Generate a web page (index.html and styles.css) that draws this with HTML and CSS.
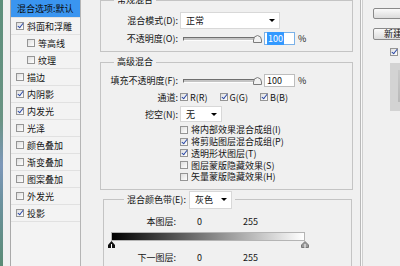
FILE: index.html
```html
<!DOCTYPE html>
<html lang="zh-CN">
<head>
    <meta charset="UTF-8">
    <meta name="viewport" content="width=device-width, initial-scale=1.0">
    <title>图层样式</title>
    <link rel="stylesheet" href="styles.css">
</head>
<body>
<div class="dialog">
    <div class="edge"></div>

    <!-- Style list -->
    <ul class="style-list">
        <li class="selected">混合选项:默认</li>
        <li><span class="cb on"></span>斜面和浮雕</li>
        <li class="sub"><span class="cb"></span>等高线</li>
        <li class="sub"><span class="cb"></span>纹理</li>
        <li><span class="cb"></span>描边</li>
        <li><span class="cb on"></span>内阴影</li>
        <li><span class="cb on"></span>内发光</li>
        <li><span class="cb"></span>光泽</li>
        <li><span class="cb"></span>颜色叠加</li>
        <li><span class="cb"></span>渐变叠加</li>
        <li><span class="cb"></span>图案叠加</li>
        <li><span class="cb"></span>外发光</li>
        <li><span class="cb on"></span>投影</li>
    </ul>

    <div class="main">
        <!-- General blending -->
        <fieldset class="group general">
            <legend>常规混合</legend>
            <div class="row mode-row">
                <label>混合模式(D):</label>
                <div class="select mode">正常<i class="arrow"></i></div>
            </div>
            <div class="row num-row">
                <label>不透明度(O):</label>
                <div class="slider">
                    <span class="track"></span>
                    <svg class="thumb" width="9" height="8" viewBox="0 0 9 8"><path d="M0.5 7.5 V5 Q0.5 1 4.5 0.5 Q8.5 1 8.5 5 V7.5 Z" fill="#f2f2f2" stroke="#7c7c7c"/></svg>
                </div>
                <span class="num focus"><span class="hl">100</span></span>
                <span class="pct">%</span>
            </div>
        </fieldset>

        <!-- Advanced blending -->
        <fieldset class="group advanced">
            <legend>高级混合</legend>
            <div class="row num-row">
                <label>填充不透明度(F):</label>
                <div class="slider">
                    <span class="track"></span>
                    <svg class="thumb" width="9" height="8" viewBox="0 0 9 8"><path d="M0.5 7.5 V5 Q0.5 1 4.5 0.5 Q8.5 1 8.5 5 V7.5 Z" fill="#f2f2f2" stroke="#7c7c7c"/></svg>
                </div>
                <span class="num">100</span>
                <span class="pct">%</span>
            </div>
            <div class="row channel-row">
                <label>通道:</label>
                <span class="channel"><span class="cb on"></span>R(R)</span>
                <span class="channel"><span class="cb on"></span>G(G)</span>
                <span class="channel"><span class="cb on"></span>B(B)</span>
            </div>
            <div class="row knock-row">
                <label>挖空(N):</label>
                <div class="select knock">无<i class="arrow"></i></div>
            </div>
            <ul class="options">
                <li><span class="cb"></span>将内部效果混合成组(I)</li>
                <li><span class="cb on"></span>将剪贴图层混合成组(P)</li>
                <li><span class="cb on"></span>透明形状图层(T)</li>
                <li><span class="cb"></span>图层蒙版隐藏效果(S)</li>
                <li><span class="cb"></span>矢量蒙版隐藏效果(H)</li>
            </ul>
        </fieldset>

        <!-- Blend if -->
        <fieldset class="group blend-if">
            <legend>
                <div class="legend-row">
                    <span>混合颜色带(E):</span>
                    <div class="select band">灰色<i class="arrow"></i></div>
                </div>
            </legend>
            <div class="layer-row">
                <label>本图层:</label>
                <span class="v0">0</span>
                <span>255</span>
            </div>
            <div class="ramp"></div>
            <div class="stops">
                <svg width="7" height="7" viewBox="0 0 7 7"><path d="M0 7 V4 L3.5 0 L7 4 V7 Z" fill="#111"/><path d="M3.5 3 V7" stroke="#fff"/></svg>
                <svg width="8" height="7" viewBox="0 0 8 7"><path d="M0.5 6.5 V4 L4 0.5 L7.5 4 V6.5 Z" fill="#9a9a9a" stroke="#777"/><path d="M4 3 V7" stroke="#fff"/></svg>
            </div>
            <div class="layer-row">
                <label>下一图层:</label>
                <span class="v0">0</span>
                <span>255</span>
            </div>
        </fieldset>
    </div>

    <div class="divider"></div>

    <div class="side">
        <button class="btn top-btn"></button>
        <button class="btn new-btn">新建样式(W)...</button>
        <span class="cb on preview-cb"></span>
        <div class="preview"><div class="preview-inner"></div></div>
    </div>
</div>
</body>
</html>
```

FILE: styles.css
```css
* {
    box-sizing: border-box;
}

body {
    margin: 0;
    width: 400px;
    height: 266px;
    overflow: hidden;
    background-color: #f0f0f0;
    font-family: "Noto Sans CJK SC", "Microsoft YaHei", sans-serif;
    font-size: 9px;
    color: #141414;
}

.dialog {
    display: flex;
    height: 266px;
}

.edge {
    width: 3px;
    flex: none;
    background: linear-gradient(to bottom, #5d8f7b 0%, #6a9484 45%, #7d97b9 62%, #6c92a0 75%, #5a8b74 100%);
}

/* style list */

.style-list {
    list-style: none;
    margin: 0 0 0 7px;
    padding: 0;
    width: 71px;
    flex: none;
    border-left: 1px solid #a9a9a9;
    border-right: 1px solid #b5b5b5;
    background-color: #f3f3f3;
}

.style-list li {
    height: 17px;
    display: flex;
    align-items: center;
    padding-left: 5px;
    border-bottom: 1px solid #e1e1e1;
    white-space: nowrap;
    overflow: hidden;
}

.style-list li.selected {
    height: 18px;
    padding-left: 6px;
    background-color: #3a95f0;
    color: #0a0a0a;
}

.style-list li.sub {
    padding-left: 16px;
}

.cb {
    position: relative;
    flex: none;
    width: 8px;
    height: 8px;
    margin-right: 3px;
    border: 1px solid #959595;
    background: linear-gradient(135deg, #dedede, #ffffff);
}

.cb.on::after {
    content: "";
    position: absolute;
    left: 2px;
    top: -1px;
    width: 2px;
    height: 5px;
    border: solid #2846a6;
    border-width: 0 1.5px 1.5px 0;
    transform: rotate(38deg);
}

/* main column */

.main {
    width: 253px;
    flex: none;
    margin: -6px 0 0 19px;
}

.group {
    margin: 0;
    padding: 0;
    min-width: 0;
    border: 1px solid #c4c4c4;
}

.group legend {
    margin-left: 13px;
    padding: 0 3px;
    height: 12px;
    line-height: 12px;
}

.row {
    display: flex;
    align-items: center;
}

.row label {
    width: 77px;
    flex: none;
    text-align: right;
    white-space: nowrap;
}

.general {
    padding-bottom: 6px;
}

.mode-row {
    margin-top: 6px;
    height: 17px;
}

.select {
    display: flex;
    align-items: center;
    justify-content: space-between;
    margin-left: 2px;
    padding: 0 4px 0 5px;
    background-color: #fff;
    border: 1px solid #d8d8d8;
}

.select.mode {
    width: 100px;
    height: 17px;
}

.arrow {
    width: 0;
    height: 0;
    border-left: 3px solid transparent;
    border-right: 3px solid transparent;
    border-top: 3px solid #000;
}

.num-row {
    margin-top: 3px;
    height: 13px;
}

.advanced .num-row {
    margin-top: 6px;
}

.slider {
    display: flex;
    align-items: center;
    margin-left: 5px;
}

.track {
    width: 74px;
    height: 4px;
    border: 1px solid;
    border-color: #6f6f6f #e0e0e0 #fdfdfd #6f6f6f;
    background-color: #c4c4c4;
}

.thumb {
    margin: 1px 0 0 -4px;
}

.num {
    width: 31px;
    height: 13px;
    margin-left: 2px;
    padding-left: 2px;
    line-height: 11px;
    background-color: #fff;
    border: 1px solid #bdbdbd;
}

.num.focus {
    border-color: #7ab1e8;
}

.hl {
    background-color: #3399ff;
    color: #fff;
    padding: 0 1px;
}

.pct {
    margin-left: 3px;
}

.advanced {
    margin-top: 4px;
    padding-bottom: 6px;
}

.channel-row {
    margin-top: 4px;
    height: 12px;
}

.channel {
    display: flex;
    align-items: center;
    margin-right: 12px;
}

.channel-row .channel:first-of-type {
    margin-left: 2px;
}

.channel .cb {
    margin-right: 2px;
}

.knock-row {
    margin-top: 3px;
    height: 16px;
}

.select.knock {
    width: 42px;
    height: 16px;
}

.options {
    list-style: none;
    margin: 2px 0 0;
    padding: 0 0 0 79px;
}

.options li {
    height: 11.75px;
    display: flex;
    align-items: center;
    white-space: nowrap;
}

/* blend if */

.blend-if {
    margin: 1px 1px 0 3px;
    height: 80px;
}

.blend-if legend {
    margin-left: 20px;
    height: 18px;
    line-height: normal;
}

.legend-row {
    display: flex;
    align-items: center;
    height: 18px;
}

.select.band {
    width: 43px;
    height: 18px;
    margin-left: 3px;
}

.layer-row {
    display: flex;
    align-items: center;
    height: 11px;
    margin-top: 7px;
}

.layer-row label {
    width: 72px;
    text-align: right;
}

.v0 {
    width: 46px;
    margin-left: 21px;
}

.ramp {
    width: 194px;
    height: 9px;
    margin: 5px 0 0 7px;
    border: 1px solid #b4b4b4;
    background: linear-gradient(to right, #000, #fff);
}

.stops {
    display: flex;
    justify-content: space-between;
    width: 201px;
    height: 7px;
    margin-left: 4px;
}

.stops + .layer-row {
    margin-top: 4px;
}

/* right side */

.divider {
    width: 3px;
    flex: none;
    margin-left: 7px;
    border-left: 1px solid #b9b9b9;
    border-right: 1px solid #cfcfcf;
    background-color: #f9f9f9;
}

.side {
    display: flex;
    flex-direction: column;
    align-items: flex-start;
    margin-left: 10px;
    width: 60px;
    flex: none;
}

.btn {
    width: 60px;
    padding: 0 0 0 10px;
    font: inherit;
    text-align: left;
    white-space: nowrap;
    border: 1px solid #8a8a8a;
    border-radius: 2px;
    background: linear-gradient(#fafafa, #dcdcdc);
    color: #111;
}

.top-btn {
    margin-top: 8px;
    height: 11px;
}

.new-btn {
    margin-top: 9px;
    height: 12px;
    line-height: 10px;
}

.preview-cb {
    margin: 8px 0 0 17px;
}

.preview {
    margin: 7px 0 0 17px;
    width: 40px;
    height: 48px;
    padding: 7px 0 0 8px;
    background-color: #d3d3d3;
}

.preview-inner {
    width: 28px;
    height: 32px;
    background: linear-gradient(#c9c9c9, #b9b9b9);
}
```
